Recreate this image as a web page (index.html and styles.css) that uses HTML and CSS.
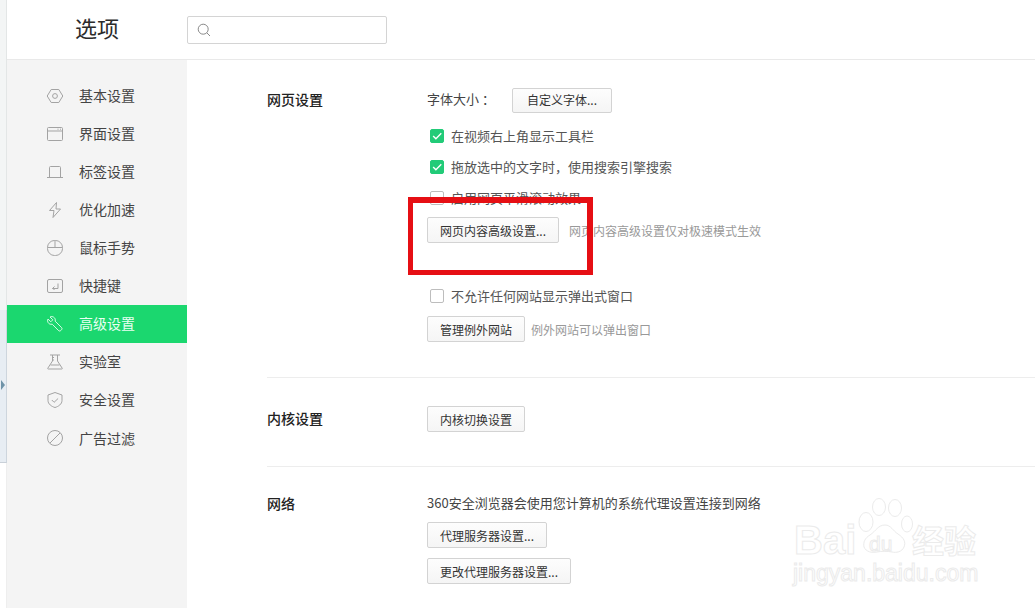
FILE: index.html
```html
<!DOCTYPE html>
<html lang="zh-CN">
<head>
<meta charset="utf-8">
<title>选项</title>
<link rel="stylesheet" href="styles.css">
</head>
<body>
<div class="app">
  <div class="strip">
    <div class="strip-top"></div>
    <div class="strip-mid"><span class="strip-arrow"></span></div>
    <div class="strip-bottom"></div>
  </div>
  <div class="main">
    <header class="header">
      <h1 class="title">选项</h1>
      <div class="search">
        <svg class="search-icon" viewBox="0 0 14 14"><circle cx="6.200" cy="6.200" r="5"/><path d="M9.800 9.800L13 13"/></svg>
      </div>
    </header>
    <div class="body">
      <nav class="nav">
        <a class="nav-item"><svg class="nav-icon" viewBox="0 0 16 16"><path d="M4.200 1.500h7.600L15.800 8l-4 6.500H4.200L.2 8z"/><circle cx="8" cy="8" r="2.400"/></svg>基本设置</a>
        <a class="nav-item"><svg class="nav-icon" viewBox="0 0 16 16"><rect x=".5" y="1.500" width="15" height="13" rx="1"/><path d="M.5 5h15M10.500 3.200h1M13 3.200h1"/></svg>界面设置</a>
        <a class="nav-item"><svg class="nav-icon" viewBox="0 0 16 16"><path d="M2.500 13.500V3.500a1 1 0 0 1 1-1h9a1 1 0 0 1 1 1v10M0 13.500h16"/></svg>标签设置</a>
        <a class="nav-item"><svg class="nav-icon" viewBox="0 0 16 16"><path d="M9.500 .5L2.500 8.500h4.500L6 15.500 13.500 7H9z"/></svg>优化加速</a>
        <a class="nav-item"><svg class="nav-icon" viewBox="0 0 16 16"><rect x=".5" y=".5" width="15" height="15" rx="7"/><path d="M.5 7.500h15M8 .5v7"/></svg>鼠标手势</a>
        <a class="nav-item"><svg class="nav-icon" viewBox="0 0 16 16"><rect x=".5" y="1.500" width="15" height="13" rx="1.500"/><path d="M11 5.500v5H5.500M7.500 8.500l-2 2 2 1"/></svg>快捷键</a>
        <a class="nav-item nav-active"><svg class="nav-icon" viewBox="0 0 16 16"><path d="M1 3L3.800 5.800 5.800 3.800 3 1C5.500-.2 9 1.500 8.200 5.200L14.800 11.800C16 13 13 16 11.800 14.800L5.200 8.200C1.500 9-.2 5.500 1 3z"/></svg>高级设置</a>
        <a class="nav-item"><svg class="nav-icon" viewBox="0 0 16 16"><path d="M3 1h10M5.500 1v6L.8 14.200c-.3.500 0 .8.500.8h13.400c.5 0 .8-.3.500-.8L10.500 7V1M5 3.500h2M5 6h2M3.500 11h9"/></svg>实验室</a>
        <a class="nav-item"><svg class="nav-icon" viewBox="0 0 16 16"><path d="M8 .5l7 2.500v5.500c0 3.500-3.500 6-7 7-3.500-1-7-3.500-7-7V3z"/><path d="M4.800 8l2.300 2.300 4-3.800"/></svg>安全设置</a>
        <a class="nav-item nav-last"><svg class="nav-icon" viewBox="0 0 16 16"><circle cx="8" cy="8" r="7.500"/><path d="M3 13L13 3"/></svg>广告过滤</a>
      </nav>
      <main class="content">
        <section class="section section-web">
          <h2 class="section-label">网页设置</h2>
          <div class="section-body">
            <div class="row font-row"><span class="row-text font-label">字体大小&nbsp;：</span><button class="btn btn-font">自定义字体...</button></div>
            <label class="check"><span class="box box-on"><svg viewBox="0 0 14 14"><path d="M2.500 7l3.200 3.200L12 3.800"/></svg></span>在视频右上角显示工具栏</label>
            <label class="check"><span class="box box-on"><svg viewBox="0 0 14 14"><path d="M2.500 7l3.200 3.200L12 3.800"/></svg></span>拖放选中的文字时，使用搜索引擎搜索</label>
            <label class="check"><span class="box"></span>启用网页平滑滚动效果</label>
            <div class="row row-advanced"><button class="btn btn-advanced">网页内容高级设置...</button><span class="hint hint-advanced">网页内容高级设置仅对极速模式生效</span></div>
            <label class="check check-popup"><span class="box"></span>不允许任何网站显示弹出式窗口</label>
            <div class="row row-except"><button class="btn btn-except">管理例外网站</button><span class="hint hint-except">例外网站可以弹出窗口</span></div>
          </div>
        </section>
        <section class="section section-core">
          <h2 class="section-label">内核设置</h2>
          <div class="section-body">
            <button class="btn btn-except">内核切换设置</button>
          </div>
        </section>
        <section class="section section-net">
          <h2 class="section-label">网络</h2>
          <div class="section-body">
            <p class="row-text net-text">360安全浏览器会使用您计算机的系统代理设置连接到网络</p>
            <button class="btn btn-proxy">代理服务器设置...</button>
            <button class="btn btn-change">更改代理服务器设置...</button>
          </div>
        </section>
      </main>
    </div>
  </div>
</div>
<div class="redbox"></div>
<div class="watermark">
  <span class="wm-bai">Bai</span>
  <svg class="wm-paw" viewBox="0 0 56 60"><ellipse cx="9" cy="24" rx="7" ry="9.500"/><ellipse cx="22" cy="9" rx="6.500" ry="8.500"/><ellipse cx="38" cy="10" rx="6.500" ry="8.500"/><ellipse cx="50" cy="26" rx="5.500" ry="8"/><path d="M28 27c6 0 8 6 13 9 6 4 8 8 6 13-2 5-8 6-12 5-5-1-10-1-15 0-5 1-11 0-13-5-1-5 1-9 6-12 6-4 8-10 15-10z"/></svg>
  <span class="wm-du">du</span>
  <span class="wm-cn">经验</span>
  <span class="wm-url">jingyan.baidu.com</span>
</div>
</body>
</html>
```
FILE: styles.css
```css
* { box-sizing: border-box; }
html, body { margin: 0; padding: 0; background: #fff; }
body {
  width: 1035px;
  height: 608px;
  overflow: hidden;
  position: relative;
  font-family: "Noto Sans CJK SC", "Liberation Sans", sans-serif;
  color: #333;
}
.app { display: flex; height: 608px; }

.strip { width: 7px; flex: none; display: flex; flex-direction: column; }
.strip-top { height: 310px; background: #f3f5f5; border-right: 1px solid #e3e6e6; }
.strip-mid {
  height: 153px;
  background: #e7edf3;
  border-right: 1px solid #cdd5dd;
  border-bottom: 1px solid #c9d0d8;
  display: flex;
  align-items: flex-start;
  padding-top: 70px;
}
.strip-arrow {
  width: 0;
  height: 0;
  margin-left: 1px;
  border-left: 4px solid #6f93a8;
  border-top: 5px solid transparent;
  border-bottom: 5px solid transparent;
}
.strip-bottom { flex: 1; background: #fff; border-right: 1px solid #eee; }

.main { flex: 1; display: flex; flex-direction: column; min-width: 0; }
.header {
  height: 60px;
  flex: none;
  display: flex;
  align-items: flex-start;
  border-bottom: 1px solid #e9e9e9;
  padding-left: 68px;
}
.title {
  margin: 11px 0 0;
  width: 112px;
  font-size: 22px;
  line-height: 32px;
  font-weight: 400;
  color: #2b2b2b;
}
.search {
  margin-top: 16px;
  width: 200px;
  height: 28px;
  border: 1px solid #d4d4d4;
  border-radius: 2px;
  display: flex;
  align-items: center;
  padding-left: 9px;
}
.search-icon { width: 14px; height: 14px; fill: none; stroke: #8a8a8a; stroke-width: 1; }

.body { flex: 1; display: flex; min-height: 0; }
.nav {
  width: 180px;
  flex: none;
  background: #f4f4f4;
  padding-top: 17px;
  display: flex;
  flex-direction: column;
}
.nav-item {
  height: 38px;
  display: flex;
  align-items: center;
  padding-left: 40px;
  padding-bottom: 2px;
  font-size: 14px;
  line-height: 36px;
  color: #444;
}
.nav-icon {
  width: 16px;
  height: 16px;
  margin-top: 2px;
  margin-right: 16px;
  flex: none;
  fill: none;
  stroke: #a3a3a3;
  stroke-width: 1;
  overflow: visible;
}
.nav-last { padding-bottom: 0; }
.nav-last .nav-icon { margin-top: 0; }
.nav-active { background: #1bd76f; color: #e9fff2; }
.nav-active .nav-icon { stroke: #d4f9e3; }

.content { flex: 1; padding: 0 0 0 80px; min-width: 0; }
.section { display: flex; border-bottom: 1px solid #ededed; }
.section:last-child { border-bottom: 0; }
.section-web { padding-top: 28px; height: 318px; }
.section-core { padding-top: 28px; height: 89px; }
.section-net { padding-top: 24px; }
.section-label {
  width: 160px;
  flex: none;
  margin: 0;
  font-size: 14px;
  line-height: 24px;
  font-weight: 500;
  color: #222;
}
.section-web .section-label { margin-top: -1px; }
.section-core .section-label { margin-top: 0; }
.section-net .section-label { margin-top: 0; }
.section-body { display: flex; flex-direction: column; align-items: flex-start; }

.row { display: flex; align-items: center; }
.row-text { font-size: 13px; color: #444; }
.font-row { height: 24px; margin-bottom: 8px; }
.font-label { width: 85px; padding-bottom: 3px; }
.check {
  height: 31px;
  display: flex;
  align-items: center;
  padding-left: 3px;
  font-size: 13px;
  color: #555;
}
.box {
  width: 14px;
  height: 14px;
  margin-right: 7px;
  border: 1px solid #bdbdbd;
  border-radius: 2px;
  background: #fff;
  flex: none;
}
.box-on { background: #22cb78; border-color: #22cb78; }
.box-on svg { display: block; width: 12px; height: 12px; fill: none; stroke: #fff; stroke-width: 1.600; }
.btn {
  height: 26px;
  padding: 2px 0 0;
  border: 1px solid #d3d3d3;
  border-radius: 2px;
  background: linear-gradient(#fdfdfd, #f5f5f5);
  font-family: inherit;
  font-size: 12px;
  line-height: 22px;
  color: #333;
  text-align: center;
}
.btn-font { width: 100px; height: 25px; padding: 0; }
.btn-advanced { width: 132px; }
.btn-except { width: 98px; }
.btn-proxy { width: 120px; }
.btn-change { width: 144px; margin-top: 10px; }
.row-advanced { margin-top: 4px; }
.check-popup { margin-top: 37px; }
.row-except { margin-top: 5px; }
.hint { font-size: 12px; color: #999; }
.hint-advanced { margin-left: 10px; }
.hint-except { margin-left: 6px; }
.net-text { margin: 0 0 7px; line-height: 24px; }

.redbox {
  position: absolute;
  left: 408px;
  top: 197px;
  width: 185px;
  height: 78px;
  border: 6px solid #e60f14;
  border-bottom-width: 5px;
  border-left-width: 5px;
}

.watermark { position: absolute; left: 0; top: 0; width: 1035px; height: 608px; pointer-events: none; }
.wm-bai, .wm-du, .wm-cn, .wm-url {
  position: absolute;
  font-family: "Liberation Sans", sans-serif;
  color: #fff;
  -webkit-text-stroke: 1px #ebebeb;
  white-space: nowrap;
}
.wm-bai { left: 794px; top: 516px; font-size: 40px; line-height: 48px; font-weight: 700; }
.wm-du { left: 869px; top: 531px; font-size: 21px; line-height: 26px; }
.wm-cn { left: 912px; top: 519px; font-size: 32px; line-height: 40px; font-family: "Noto Sans CJK SC", sans-serif; font-weight: 700; }
.wm-url { left: 793px; top: 558px; font-size: 23px; line-height: 30px; }
.wm-paw { position: absolute; left: 857px; top: 498px; width: 56px; height: 60px; fill: #fff; stroke: #ebebeb; stroke-width: 1; }
```
